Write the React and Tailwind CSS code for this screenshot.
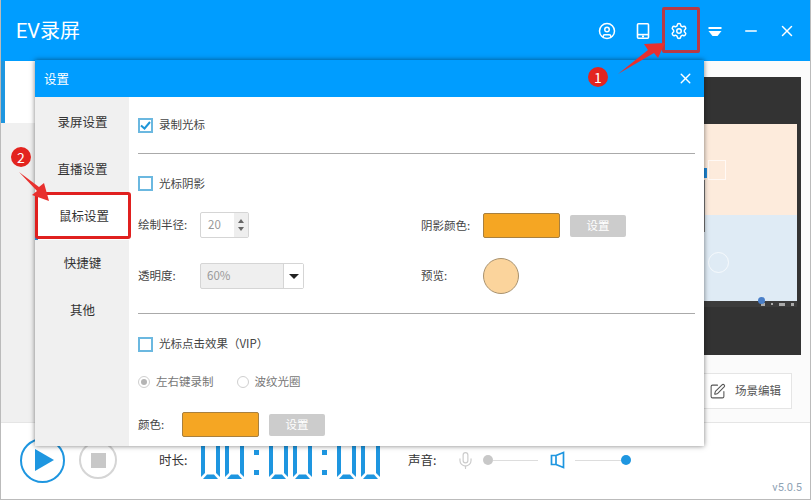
import { CircleUser, Settings, Minus, X, SquarePen, Mic } from "lucide-react";

const font = { fontFamily: '"Noto Sans CJK SC", "Liberation Sans", sans-serif' };

function Checkbox({ checked }) {
  return (
    <span className="w-[15px] h-[15px] border-2 border-[#6bb8e0] bg-white flex items-center justify-center shrink-0">
      {checked && (
        <svg width="11" height="11" viewBox="0 0 11 11">
          <path d="M1 5.5 L4.5 8.5 L10 2" fill="none" stroke="#1e96d8" strokeWidth="2" />
        </svg>
      )}
    </span>
  );
}

function Radio({ checked, label }) {
  return (
    <div className="flex items-center gap-[6px]">
      <span className="w-[12px] h-[12px] rounded-full border border-[#cfcfcf] bg-white flex items-center justify-center">
        {checked && <span className="w-[6px] h-[6px] rounded-full bg-[#b5b5b5]" />}
      </span>
      <span className="text-[#777]">{label}</span>
    </div>
  );
}

function Swatch() {
  return <div className="w-[77px] h-[25px] bg-[#f5a623] border border-[#a8803f] rounded-[2px]" />;
}

function DisabledButton() {
  return (
    <div className="w-[56px] h-[22px] bg-[#cccccc] rounded-[2px] text-white flex items-center justify-center">
      设置
    </div>
  );
}

// seven segment zero, only the lower part shows under the dialog
function Zero() {
  return (
    <svg width="19" height="38" viewBox="0 0 19 38" className="shrink-0">
      <path d="M0 0 H4 V32 L0 36 Z M19 0 H15 V32 L19 36 Z" fill="#1e96e0" />
      <path d="M2 38 L6 33.5 L13 33.5 L17 38 Z" fill="#1e96e0" />
    </svg>
  );
}

function Colon() {
  return (
    <div className="w-[13px] h-[38px] mx-[6px] pt-[4px] flex flex-col items-center justify-center gap-[15px] shrink-0">
      <span className="w-[5px] h-[5px] bg-[#1e96e0]" />
      <span className="w-[5px] h-[5px] bg-[#1e96e0]" />
    </div>
  );
}

function Clock() {
  return (
    <div className="flex items-center">
      <div className="flex gap-[5px]"><Zero /><Zero /></div>
      <Colon />
      <div className="flex gap-[5px]"><Zero /><Zero /></div>
      <Colon />
      <div className="flex gap-[5px]"><Zero /><Zero /></div>
    </div>
  );
}

const tabs = ["录屏设置", "直播设置", "鼠标设置", "快捷键", "其他"];

function Dialog() {
  return (
    <div className="absolute left-[34px] top-[60px] w-[669px] h-[386px] bg-white shadow-[0_0_5px_rgba(0,0,0,0.5)] flex flex-col">
      <div className="h-[37px] bg-[#009dff] flex items-center justify-between pl-[9px] pr-[10px] text-white shrink-0">
        <span className="text-[12.5px] pt-[1px]">设置</span>
        <X size={17} strokeWidth={2} />
      </div>
      <div className="flex flex-1">
        <div className="w-[94px] bg-[#f0f0f0] pt-[2px]">
          {tabs.map((t, i) => (
            <div
              key={t}
              className={`h-[47px] pl-[1px] flex items-center justify-center text-[12.5px] text-[#333] ${
                i === 2 ? "bg-white border-l-[3px] border-[#1e88d8]" : ""
              }`}
            >
              {t}
            </div>
          ))}
        </div>
        <div className="flex-1 pl-[9px] pr-[9px] text-[11.5px] text-[#444]">
          <div className="h-[57px] flex items-center gap-[6px] border-b border-[#aaaaaa]">
            <Checkbox checked />
            <span>录制光标</span>
          </div>
          <div className="h-[38px] flex items-end">
            <div className="flex items-center gap-[6px]">
              <Checkbox />
              <span>光标阴影</span>
            </div>
          </div>
          <div className="flex h-[46px] items-end">
            <div className="w-[283px] flex items-center">
              <span className="w-[62px]">绘制半径:</span>
              <div className="w-[49px] h-[26px] border border-[#d5d5d5] rounded-[2px] flex text-[#999]">
                <span className="flex-1 pl-[7px] flex items-center">20</span>
                <div className="w-[14px] bg-[#eeeeee] flex flex-col items-center justify-center gap-[4px]">
                  <span className="border-x-[3px] border-x-transparent border-b-[4px] border-b-[#666]" />
                  <span className="border-x-[3px] border-x-transparent border-t-[4px] border-t-[#666]" />
                </div>
              </div>
            </div>
            <div className="flex items-center">
              <span className="w-[62px]">阴影颜色:</span>
              <Swatch />
              <div className="ml-[10px]"><DisabledButton /></div>
            </div>
          </div>
          <div className="flex h-[60px] items-center pt-[16px]">
            <div className="w-[283px] flex items-center">
              <span className="w-[62px]">透明度:</span>
              <div className="w-[104px] h-[26px] bg-[#efefef] border border-[#d5d5d5] rounded-[2px] flex text-[#999]">
                <span className="flex-1 pl-[6px] flex items-center">60%</span>
                <div className="w-[20px] bg-white border-l border-[#d5d5d5] flex items-center justify-center">
                  <span className="border-x-[5px] border-x-transparent border-t-[5px] border-t-[#222]" />
                </div>
              </div>
            </div>
            <div className="flex items-center">
              <span className="w-[62px]">预览:</span>
              <div className="w-[36px] h-[36px] rounded-full bg-[#fbd49c] border border-[#a8926f]" />
            </div>
          </div>
          <div className="h-[16px] border-b border-[#aaaaaa]" />
          <div className="h-[30px] mt-[15px] flex items-center gap-[6px]">
            <Checkbox />
            <span>光标点击效果（VIP）</span>
          </div>
          <div className="flex items-center gap-[23px] mt-[11px] h-[24px]">
            <Radio checked label="左右键录制" />
            <Radio label="波纹光圈" />
          </div>
          <div className="flex items-center mt-[18px]">
            <span className="w-[44px]">颜色:</span>
            <Swatch />
            <div className="ml-[10px]"><DisabledButton /></div>
          </div>
        </div>
      </div>
    </div>
  );
}

function Annotations() {
  return (
    <>
      <div className="absolute left-[661px] top-[7px] w-[38px] h-[46px] border-[3px] border-[#b83a45] rounded-[2px]" />
      <div className="absolute left-[34px] top-[192px] w-[96px] h-[47px] border-[3px] border-[#e0201f] rounded-[3px]" />
      <svg className="absolute left-[-1px] top-0 pointer-events-none" width="811" height="500">
        <path d="M618 74 L648 50 L644 44 L665 43 L658 58 L654 53 Z" fill="#e8302e" />
        <path d="M19 172 L39 187 L44 183 L49 201 L32 195 L37 191 Z" fill="#e8302e" />
      </svg>
      <div className="absolute left-[587px] top-[67px] w-[20px] h-[20px] rounded-full bg-[#e3241f] text-white text-[14px] flex items-center justify-center">
        1
      </div>
      <div className="absolute left-[10px] top-[147px] w-[20px] h-[20px] rounded-full bg-[#e3241f] text-white text-[14px] flex items-center justify-center">
        2
      </div>
    </>
  );
}

// thumbnail of the recorded scene
function Preview() {
  return (
    <div className="relative h-[278px] bg-[#333333] pr-[4px] flex flex-col">
      <div className="h-[47px]" />
      <div className="h-[91px] bg-[#fdebdc]" />
      <div className="h-[86px] bg-[#dfebf5]" />
      <div className="h-[6px] bg-[#3c3c3c] flex items-center justify-end gap-[6px] pr-[3px]">
        <span className="w-[4px] h-[3px] bg-[#aaaaaa]" />
        <span className="w-[2px] h-[2px] bg-[#aaaaaa]" />
        <span className="w-[6px] h-[3px] bg-[#aaaaaa]" />
        <span className="w-[3px] h-[3px] bg-[#aaaaaa]" />
      </div>
      <span className="absolute left-[597px] top-[83px] w-[18px] h-[20px] border border-white/70" />
      <span className="absolute left-[597px] top-[175px] w-[21px] h-[21px] rounded-full border border-white/70" />
      <span className="absolute left-[593px] top-[91px] w-[3px] h-[10px] bg-[#1e88d8]" />
      <span className="absolute left-[593px] top-[103px] w-[1px] h-[52px] bg-[#777777]" />
      <span className="absolute right-[36px] top-[220px] w-[7px] h-[7px] rounded-full bg-[#4a7fc8]" />
    </div>
  );
}

function App() {
  return (
    <div
      className="relative w-[811px] h-[500px] flex flex-col bg-white border-x border-b border-[#bbbbbb] overflow-hidden"
      style={font}
    >
      <div className="h-[61px] bg-[#009dff] flex items-center justify-between pl-[15px] text-white shrink-0">
        <span className="text-[20px] font-['Roboto','Noto_Sans_CJK_SC',sans-serif]">EV录屏</span>
        <div className="flex items-center gap-[18px] pr-[14px]">
          <CircleUser size={18} />
          <svg width="18" height="18" viewBox="0 0 18 18" fill="none" stroke="#fff" strokeWidth="1.6">
            <rect x="3.5" y="1.8" width="11" height="14.4" rx="1" />
            <path d="M3.5 12.6 H14.5" />
            <path d="M8 14.4 H10" />
          </svg>
          <Settings size={18} />
          <svg width="18" height="18" viewBox="0 0 18 18">
            <rect x="2.5" y="5" width="13" height="2" fill="#fff" />
            <path d="M2.5 9 H15.5 L11.5 14 H6.5 Z" fill="#fff" />
          </svg>
          <Minus size={18} />
          <X size={18} />
        </div>
      </div>

      <div className="h-[362px] flex border-b border-[#e5e5e5] shrink-0">
        <div className="w-[100px] bg-[#f0f0f0]">
          <div className="h-[62px] bg-white border-l-[4px] border-[#1e96e0]" />
        </div>
        <div className="flex-1 pt-[16px] pr-[9px] pl-[10px] bg-[#fbfbfb]">
          <Preview />
          <div className="flex justify-end mt-[18px] pr-[9px]">
            <div className="w-[120px] h-[36px] bg-white border border-[#e5e5e5] flex items-center justify-end gap-[9px] pr-[10px] text-[11.5px] text-[#555]">
              <SquarePen size={17} strokeWidth={1.5} />
              <span>场景编辑</span>
            </div>
          </div>
        </div>
      </div>

      <div className="flex-1 flex items-center pl-[19px] pb-[2px] text-[12.5px] text-[#333]">
        <div className="w-[45px] h-[45px] rounded-full border-2 border-[#1e96e0] flex items-center justify-center shrink-0">
          <span className="ml-[4px] border-y-[11px] border-y-transparent border-l-[19px] border-l-[#1e96e0]" />
        </div>
        <div className="ml-[14px] w-[38px] h-[38px] rounded-full border-2 border-[#d5d5d5] flex items-center justify-center shrink-0">
          <span className="w-[15px] h-[15px] bg-[#c8c8c8]" />
        </div>
        <span className="ml-[42px] w-[42px]">时长:</span>
        <Clock />
        <span className="ml-[28px] w-[30px]">声音:</span>
        <Mic size={19} strokeWidth={1.5} className="text-[#cccccc] ml-[18px]" />
        <div className="ml-[8px] w-[55px] flex items-center">
          <span className="w-[10px] h-[10px] rounded-full bg-[#c8c8c8]" />
          <span className="flex-1 h-[1px] bg-[#dddddd]" />
        </div>
        <svg width="16" height="18" viewBox="0 0 16 18" className="ml-[12px]">
          <path d="M1.5 4.5 H6 V13.5 H1.5 Z M6 4.5 L13.5 1.5 V16.5 L6 13.5" fill="none" stroke="#1e96e0" strokeWidth="1.7" />
        </svg>
        <div className="ml-[9px] w-[56px] flex items-center">
          <span className="flex-1 h-[1px] bg-[#dddddd]" />
          <span className="w-[10px] h-[10px] rounded-full bg-[#1e96e0]" />
        </div>
      </div>
      <span className="absolute right-[8px] bottom-[3px] text-[11px] text-[#8fa3b5] font-['Roboto',sans-serif]">v5.0.5</span>

      <Dialog />
      <Annotations />
    </div>
  );
}

export default App;
